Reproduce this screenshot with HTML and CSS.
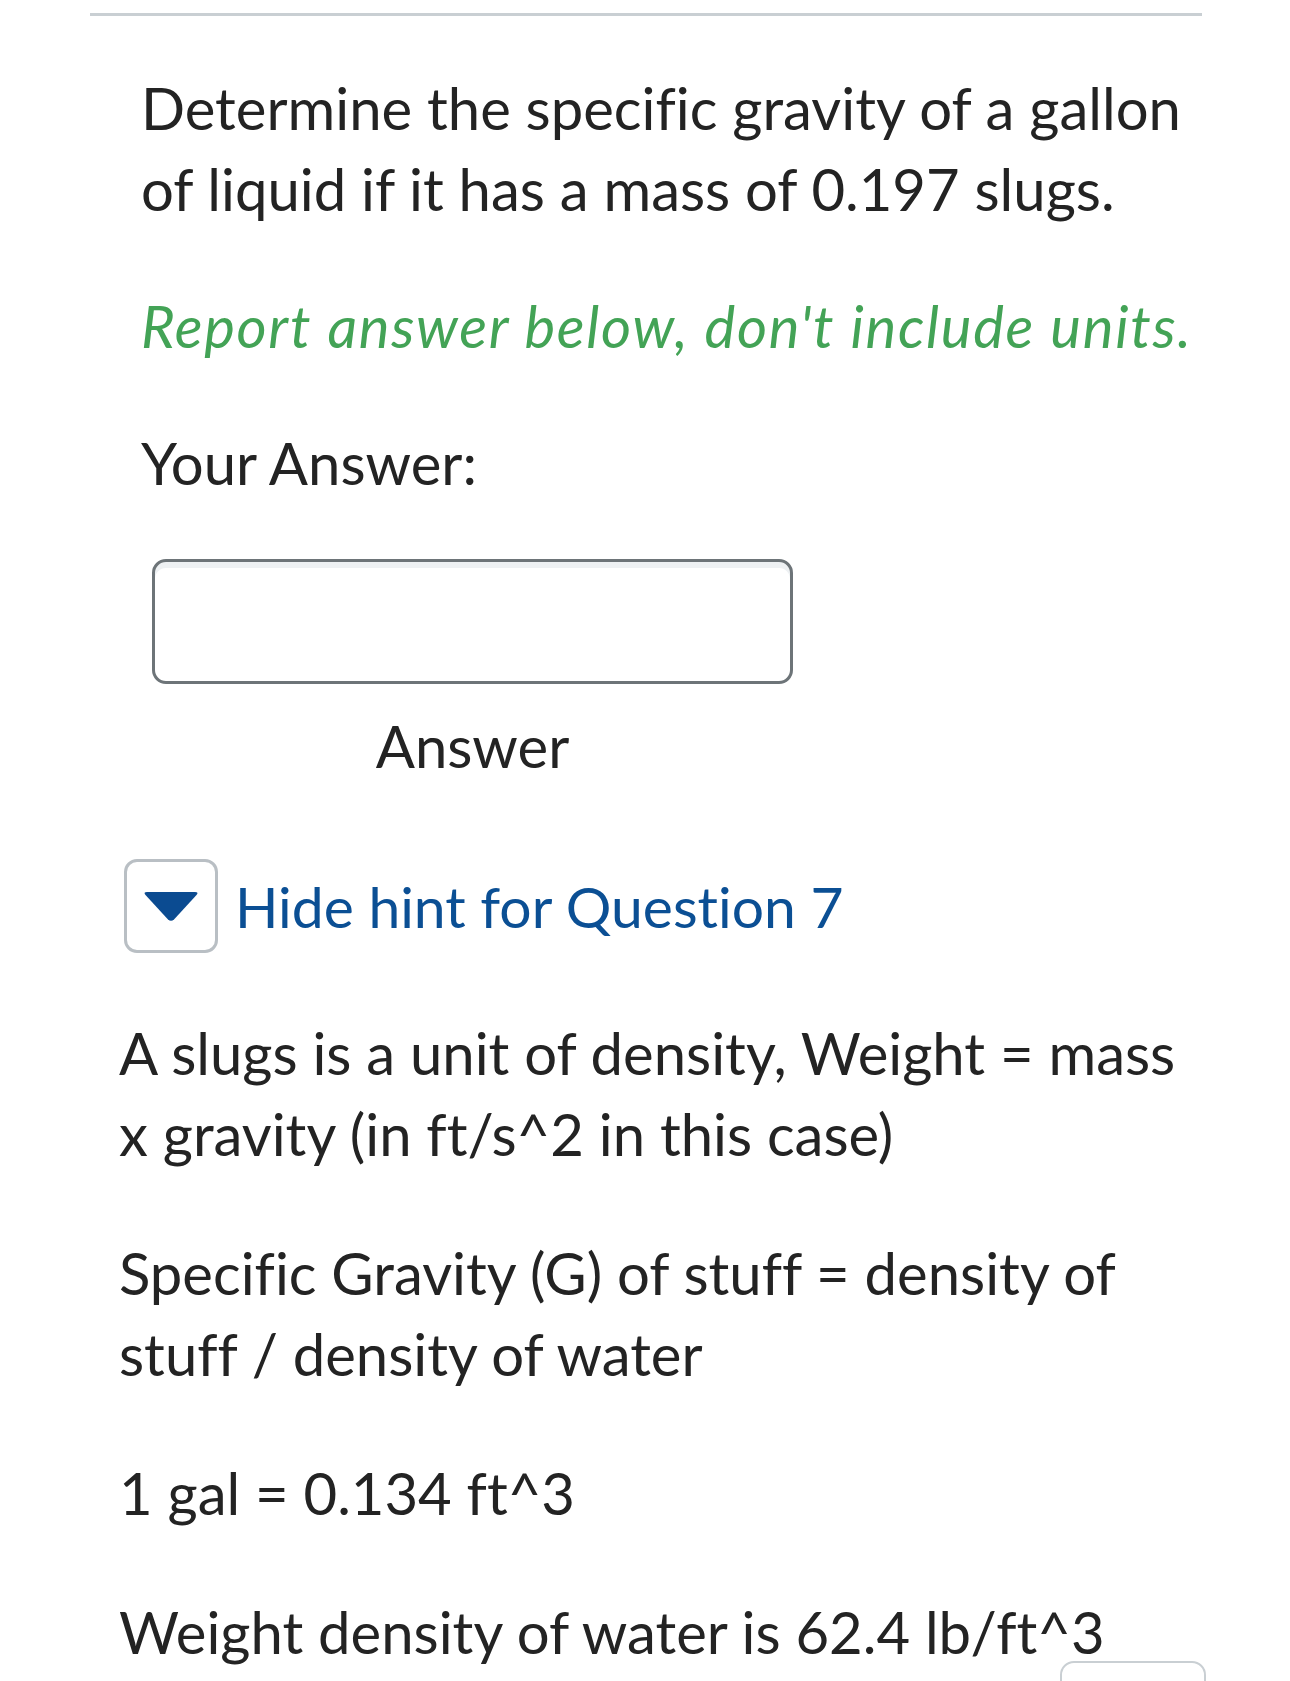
FILE: index.html
```html
<!DOCTYPE html>
<html lang="en">
<head>
    <meta charset="UTF-8">
    <meta name="viewport" content="width=device-width, initial-scale=1.0">
    <title>Question 7</title>
    <link rel="stylesheet" href="styles.css">
</head>
<body>
    <div class="page">
        <hr class="divider">

        <div class="question">
            <p>Determine the specific gravity of a gallon of liquid if it has a mass of 0.197 slugs.</p>
            <p class="note">Report answer below, don't include units.</p>
            <p>Your Answer:</p>

            <div class="answer">
                <input class="answer-input" type="text" aria-label="Answer">
                <div class="answer-label">Answer</div>
            </div>
        </div>

        <div class="hint">
            <div class="hint-toggle">
                <button class="hint-btn" aria-label="Hide hint">
                    <svg width="56" height="31" viewBox="0 0 56 31">
                        <path d="M4 1 H52 Q56 1 53.5 4 L31 28.5 Q28 31 25 28.5 L2.5 4 Q0 1 4 1 Z" fill="#0b4b91"/>
                    </svg>
                </button>
                <span class="hint-title">Hide hint for Question 7</span>
            </div>

            <div class="hint-body">
                <p>A slugs is a unit of density, Weight = mass x gravity (in ft/s^2 in this case)</p>
                <p>Specific Gravity (G) of stuff = density of stuff / density of water</p>
                <p>1 gal = 0.134 ft^3</p>
                <p>Weight density of water is 62.4 lb/ft^3</p>
            </div>
        </div>

        <div class="footer">
            <div class="next-btn"></div>
        </div>
    </div>
</body>
</html>
```

FILE: styles.css
```css
body {
    margin: 0;
    background: #fff;
    font-family: 'Lato', 'Noto Sans', sans-serif;
    font-variant-ligatures: none;
    color: #232323;
    overflow: hidden;
}

.page {
    padding: 0 85px 0 90px;
}

p {
    margin: 0 0 56px 0;
    font-size: 58px;
    line-height: 81px;
}

.divider {
    width: 1112px;
    height: 3px;
    margin: 13px 0 0 0;
    border: none;
    background-color: #c9cfd3;
}

.question {
    padding-left: 51px;
    margin-top: 51px;
}

.note {
    color: #43a356;
    font-style: italic;
    letter-spacing: 1.7px;
    white-space: nowrap;
}

.answer {
    width: 641px;
    margin-left: 11px;
    margin-top: 3px;
}

.answer-input {
    display: block;
    box-sizing: border-box;
    width: 641px;
    height: 125px;
    border: 3px solid #6d7478;
    border-radius: 14px;
    box-shadow: inset 0 6px 0 #eef1f3;
    background: #fff;
    outline: none;
}

.answer-label {
    text-align: center;
    font-size: 58px;
    line-height: 81px;
    margin-top: 21px;
}

.hint {
    padding-left: 29px;
    margin-top: 73px;
}

.hint-toggle {
    display: flex;
    align-items: center;
    gap: 17px;
    margin-left: 5px;
}

.hint-btn {
    width: 94px;
    height: 94px;
    padding: 0;
    display: flex;
    align-items: center;
    justify-content: center;
    background: #fff;
    border: 3px solid #b9bfc4;
    border-radius: 13px;
}

.hint-title {
    font-size: 57px;
    line-height: 81px;
    color: #0b4f94;
}

.hint-body {
    margin-top: 59px;
}

.hint-body p {
    margin-bottom: 58px;
}

.hint-body p:last-child {
    margin-bottom: 0;
}

.footer {
    display: flex;
    justify-content: flex-end;
    width: 1116px;
    margin-top: -11px;
}

.next-btn {
    width: 146px;
    height: 60px;
    box-sizing: border-box;
    border: 2px solid #c9cfd3;
    border-radius: 14px;
}
```
